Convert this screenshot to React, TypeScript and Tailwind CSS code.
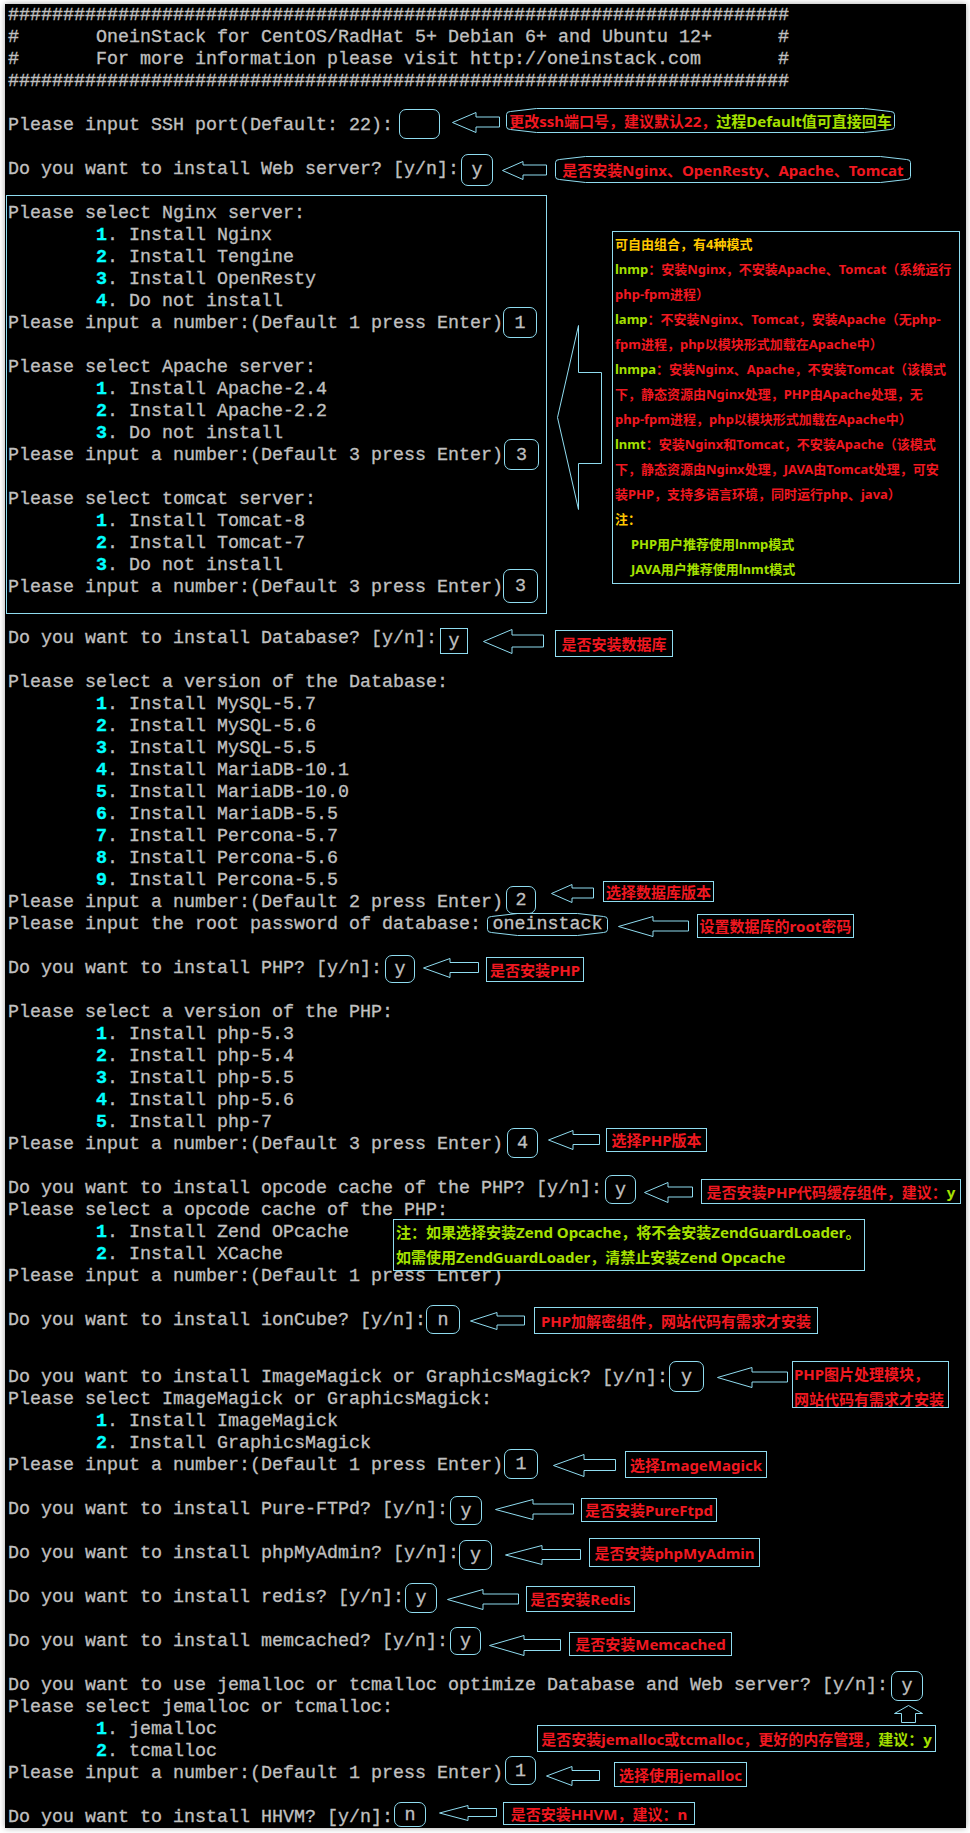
import type { ReactNode } from "react";

const CN = "font-['Noto_Sans','Noto_Sans_CJK_SC',sans-serif] font-bold whitespace-nowrap";
const HASHES = "#".repeat(71);
const STROKE = "#8fdcf0";

function Line({ text, className = "", children }: { text?: ReactNode; className?: string; children?: ReactNode }) {
  return (
    <div className={`flex h-[22px] items-center ${className}`}>
      <span className="mt-[2px] shrink-0 [-webkit-text-stroke:0.3px]">{text}</span>
      {children}
    </div>
  );
}

function Item({ n, text, children }: { n: number; text: string; children?: ReactNode }) {
  return (
    <Line
      text={
        <>
          {"        "}
          <span className="font-bold text-[#00ffff]">{n}</span>. {text}
        </>
      }
    >
      {children}
    </Line>
  );
}

function Blank() {
  return <div className="h-[22px]" />;
}

function Answer({ className, children }: { className: string; children?: ReactNode }) {
  return (
    <div className={`flex shrink-0 items-center justify-center rounded-[7px] border border-[#8fdcf0] pt-[2px] [-webkit-text-stroke:0.3px] ${className}`}>
      {children}
    </div>
  );
}

// left-pointing outline arrow
function Arrow({ w, h, head, shaft, className }: { w: number; h: number; head: number; shaft: number; className: string }) {
  const top = (h - shaft) / 2 - 0.5;
  const bot = top + shaft;
  const mid = h / 2;
  const pts = `0.5,${mid} ${head},0.5 ${head},${top} ${w - 0.5},${top} ${w - 0.5},${bot} ${head},${bot} ${head},${h - 0.5}`;
  return (
    <svg width={w} height={h} viewBox={`0 0 ${w} ${h}`} fill="none" stroke={STROKE} className={`shrink-0 ${className}`}>
      <polygon points={pts} />
    </svg>
  );
}

function Tag({ className, children }: { className: string; children: ReactNode }) {
  return (
    <div className={`flex shrink-0 items-center justify-center border border-[#8fdcf0] text-[15px] text-[#f01820] ${CN} ${className}`}>
      {children}
    </div>
  );
}

function bulgePath(w: number, h: number) {
  const r = w - 0.5;
  const u = h - 0.5;
  const t = 0.5;
  const a = 0.5;
  const edge = Math.min(30, w / 4);
  return `M${a} ${t + 6}Q${a} ${t + 3} ${a + 4} ${t + 3}L${a + edge} ${t}L${r - edge} ${t}L${r - 4} ${t + 3}Q${r} ${t + 3} ${r} ${t + 6}L${r} ${u - 6}Q${r} ${u - 3} ${r - 4} ${u - 3}L${r - edge} ${u}L${a + edge} ${u}L${a + 4} ${u - 3}Q${a} ${u - 3} ${a} ${u - 6}Z`;
}

// callout with the flattened-ellipse outline
function Bulge({ w, h, className, children }: { w: number; h: number; className: string; children: ReactNode }) {
  return (
    <div className={`relative flex shrink-0 items-center justify-center ${className}`}>
      <svg width={w} height={h} viewBox={`0 0 ${w} ${h}`} fill="none" stroke={STROKE} className="absolute top-0 left-0">
        <path d={bulgePath(w, h)} />
      </svg>
      {children}
    </div>
  );
}

function Ok({ children }: { children: ReactNode }) {
  return <span className="text-[#a5e000]">{children}</span>;
}

function ModeNote() {
  return (
    <div className={`ml-[9px] h-[353px] w-[348px] shrink-0 border border-[#8fdcf0] mt-[36px] pl-[2px] text-[13px] leading-[25px] text-[#f01820] ${CN}`}>
      <div className="text-[#ffc800]">可自由组合，有4种模式</div>
      <div><Ok>lnmp</Ok>：安装Nginx，不安装Apache、Tomcat（系统运行</div>
      <div>php-fpm进程）</div>
      <div><Ok>lamp</Ok>：不安装Nginx、Tomcat，安装Apache（无php-</div>
      <div>fpm进程，php以模块形式加载在Apache中）</div>
      <div><Ok>lnmpa</Ok>：安装Nginx、Apache，不安装Tomcat（该模式</div>
      <div>下，静态资源由Nginx处理，PHP由Apache处理，无</div>
      <div>php-fpm进程，php以模块形式加载在Apache中）</div>
      <div><Ok>lnmt</Ok>：安装Nginx和Tomcat，不安装Apache（该模式</div>
      <div>下，静态资源由Nginx处理，JAVA由Tomcat处理，可安</div>
      <div>装PHP，支持多语言环境，同时运行php、java）</div>
      <div className="text-[#ffc800]">注：</div>
      <div className="pl-[16px] text-[#a5e000]">PHP用户推荐使用lnmp模式</div>
      <div className="pl-[16px] text-[#a5e000]">JAVA用户推荐使用lnmt模式</div>
    </div>
  );
}

function WebServerSection() {
  return (
    <div className="-ml-[2px] flex h-[419px] items-start">
      <div className="h-[419px] w-[541px] shrink-0 border border-[#8fdcf0] pt-[6px] pl-[1px]">
        <Line text="Please select Nginx server:" />
        <Item n={1} text="Install Nginx" />
        <Item n={2} text="Install Tengine" />
        <Item n={3} text="Install OpenResty" />
        <Item n={4} text="Do not install" />
        <Line text="Please input a number:(Default 1 press Enter)">
          <Answer className="mb-[1px] h-[31px] w-[34px]">1</Answer>
        </Line>
        <Blank />
        <Line text="Please select Apache server:" />
        <Item n={1} text="Install Apache-2.4" />
        <Item n={2} text="Install Apache-2.2" />
        <Item n={3} text="Do not install" />
        <Line text="Please input a number:(Default 3 press Enter)">
          <Answer className="mb-[1px] ml-[1px] h-[31px] w-[35px]">3</Answer>
        </Line>
        <Blank />
        <Line text="Please select tomcat server:" />
        <Item n={1} text="Install Tomcat-8" />
        <Item n={2} text="Install Tomcat-7" />
        <Item n={3} text="Do not install" />
        <Line text="Please input a number:(Default 3 press Enter)">
          <Answer className="mb-[2px] h-[34px] w-[35px]">3</Answer>
        </Line>
      </div>
      <svg width="46" height="185" viewBox="0 0 46 185" fill="none" stroke={STROKE} className="mt-[130px] ml-[10px] shrink-0">
        <polygon points="21.5,0.5 21.5,47.5 44.5,47.5 44.5,138.5 21.5,138.5 21.5,184.5 0.5,92.5" />
      </svg>
      <ModeNote />
    </div>
  );
}

export default function App() {
  return (
    <div className="h-[1833px] w-[970px] bg-white pt-[4px] pl-[5px]">
      <div className="relative h-[1824px] w-[961px] overflow-hidden bg-black pl-[3px] font-['Liberation_Mono',monospace] text-[18.33px] leading-[22px] font-normal whitespace-pre text-[#c0c0c0] shadow-[0_0_6px_rgba(0,0,0,0.35)]">
        <Line text={HASHES} />
        <Line text="#       OneinStack for CentOS/RadHat 5+ Debian 6+ and Ubuntu 12+      #" />
        <Line text="#       For more information please visit http://oneinstack.com       #" />
        <Line text={HASHES} />
        <Blank />
        <Line text="Please input SSH port(Default: 22):">
          <Answer className="mb-[2px] ml-[6px] h-[30px] w-[41px]" />
          <Arrow w={48} h={21} head={24} shaft={10} className="mb-[5px] ml-[12px]" />
          <Bulge w={389} h={25} className="mb-[9px] ml-[6px] h-[25px] w-[389px] text-[15px] text-[#f01820]">
            <span className={`relative ${CN}`}>
              更改ssh端口号，建议默认22，<Ok>过程Default值可直接回车</Ok>
            </span>
          </Bulge>
        </Line>
        <Blank />
        <Line text="Do you want to install Web server? [y/n]:">
          <Answer className="mt-[2px] ml-[2px] h-[32px] w-[32px]">y</Answer>
          <Arrow w={45} h={19} head={21} shaft={10} className="mt-[3px] ml-[9px]" />
          <Bulge w={356} h={27} className="mt-[1px] ml-[8px] h-[27px] w-[356px] text-[15px] text-[#f01820]">
            <span className={`relative ${CN}`}>是否安装Nginx、OpenResty、Apache、Tomcat</span>
          </Bulge>
        </Line>
        <div className="h-[15px]" />
        <WebServerSection />

        <Line text="Do you want to install Database? [y/n]:" className="mt-[13px]">
          <Answer className="mt-[6px] ml-[3px] h-[26px] w-[28px] rounded-none">y</Answer>
          <Arrow w={61} h={25} head={29} shaft={12} className="mt-[7px] ml-[15px]" />
          <Tag className="mt-[11px] ml-[11px] h-[27px] w-[118px]">是否安装数据库</Tag>
        </Line>
        <Blank />
        <Line text="Please select a version of the Database:" />
        <Item n={1} text="Install MySQL-5.7" />
        <Item n={2} text="Install MySQL-5.6" />
        <Item n={3} text="Install MySQL-5.5" />
        <Item n={4} text="Install MariaDB-10.1" />
        <Item n={5} text="Install MariaDB-10.0" />
        <Item n={6} text="Install MariaDB-5.5" />
        <Item n={7} text="Install Percona-5.7" />
        <Item n={8} text="Install Percona-5.6" />
        <Item n={9} text="Install Percona-5.5" />
        <Line text="Please input a number:(Default 2 press Enter)">
          <Answer className="mb-[4px] ml-[3px] h-[28px] w-[30px]">2</Answer>
          <Arrow w={43} h={19} head={21} shaft={10} className="mb-[17px] ml-[15px]" />
          <Tag className="mb-[21px] ml-[9px] h-[21px] w-[111px]">选择数据库版本</Tag>
        </Line>
        <Line text="Please input the root password of database:">
          <Bulge w={121} h={23} className="mt-[1px] ml-[6px] h-[23px] w-[121px]">
            <span className="relative [-webkit-text-stroke:0.3px]">oneinstack</span>
          </Bulge>
          <Arrow w={71} h={21} head={35} shaft={10} className="mt-[5px] ml-[10px]" />
          <Tag className="mt-[4px] ml-[8px] h-[24px] w-[157px]">设置数据库的root密码</Tag>
        </Line>
        <Blank />
        <Line text="Do you want to install PHP? [y/n]:">
          <Answer className="mt-[2px] ml-[3px] h-[28px] w-[30px]">y</Answer>
          <Arrow w={56} h={20} head={27} shaft={10} className="ml-[8px]" />
          <Tag className="mt-[3px] ml-[7px] h-[25px] w-[98px]">是否安装PHP</Tag>
        </Line>
        <Blank />
        <Line text="Please select a version of the PHP:" />
        <Item n={1} text="Install php-5.3" />
        <Item n={2} text="Install php-5.4" />
        <Item n={3} text="Install php-5.5" />
        <Item n={4} text="Install php-5.6" />
        <Item n={5} text="Install php-7" />
        <Line text="Please input a number:(Default 3 press Enter)">
          <Answer className="mb-[2px] ml-[4px] h-[30px] w-[31px]">4</Answer>
          <Arrow w={52} h={20} head={25} shaft={10} className="mb-[8px] ml-[10px]" />
          <Tag className="mb-[8px] ml-[6px] h-[24px] w-[101px]">选择PHP版本</Tag>
        </Line>
        <Blank />
        <Line text="Do you want to install opcode cache of the PHP? [y/n]:">
          <Answer className="mt-[3px] ml-[3px] h-[29px] w-[31px]">y</Answer>
          <Arrow w={49} h={21} head={24} shaft={10} className="mt-[9px] ml-[8px]" />
          <Tag className="mt-[7px] ml-[8px] h-[25px] w-[260px]">
            是否安装PHP代码缓存组件，建议：<Ok>y</Ok>
          </Tag>
        </Line>
        <Line text="Please select a opcode cache of the PHP:" />
        <Item n={1} text="Install Zend OPcache" />
        <Item n={2} text="Install XCache" />
        <Line text="Please input a number:(Default 1 press Enter)" />
        {/* this note sits on top of the terminal lines */}
        <div className={`absolute top-[1215px] left-[388px] h-[52px] w-[472px] border border-[#8fdcf0] bg-black pl-[2px] text-[15px] leading-[25px] text-[#a5e000] ${CN}`}>
          <div>注：如果选择安装Zend Opcache，将不会安装ZendGuardLoader。</div>
          <div>如需使用ZendGuardLoader，清禁止安装Zend Opcache</div>
        </div>
        <Blank />
        <Line text="Do you want to install ionCube? [y/n]:">
          <Answer className="mb-[1px] h-[29px] w-[34px]">n</Answer>
          <Arrow w={55} h={18} head={27} shaft={9} className="mt-[2px] ml-[10px]" />
          <Tag className="mt-[1px] ml-[9px] h-[27px] w-[284px]">PHP加解密组件，网站代码有需求才安装</Tag>
        </Line>
        <Blank />
        <Line text="Do you want to install ImageMagick or GraphicsMagick? [y/n]:" className="mt-[13px]">
          <Answer className="mb-[1px] ml-[1px] h-[31px] w-[35px]">y</Answer>
          <Arrow w={71} h={21} head={35} shaft={10} className="mt-[1px] ml-[13px]" />
          <Tag className="mt-[15px] ml-[4px] h-[47px] w-[157px] flex-col items-start justify-start pl-[1px] leading-[25px]">
            <div>PHP图片处理模块，</div>
            <div>网站代码有需求才安装</div>
          </Tag>
        </Line>
        <Line text="Please select ImageMagick or GraphicsMagick:" />
        <Item n={1} text="Install ImageMagick" />
        <Item n={2} text="Install GraphicsMagick" />
        <Line text="Please input a number:(Default 1 press Enter)">
          <Answer className="mb-[2px] ml-[1px] h-[30px] w-[34px]">1</Answer>
          <Arrow w={63} h={23} head={31} shaft={11} className="mt-[1px] ml-[15px]" />
          <Tag className="mb-[1px] ml-[9px] h-[27px] w-[142px]">选择ImageMagick</Tag>
        </Line>
        <Blank />
        <Line text="Do you want to install Pure-FTPd? [y/n]:">
          <Answer className="mt-[3px] ml-[2px] h-[29px] w-[32px]">y</Answer>
          <Arrow w={79} h={21} head={38} shaft={10} className="mt-[1px] ml-[13px]" />
          <Tag className="mt-[2px] ml-[7px] h-[24px] w-[136px]">是否安装PureFtpd</Tag>
        </Line>
        <Blank />
        <Line text="Do you want to install phpMyAdmin? [y/n]:">
          <Answer className="mt-[4px] h-[30px] w-[33px]">y</Answer>
          <Arrow w={76} h={20} head={37} shaft={10} className="mt-[4px] ml-[13px]" />
          <Tag className="mb-[1px] ml-[8px] h-[29px] w-[171px]">是否安装phpMyAdmin</Tag>
        </Line>
        <Blank />
        <Line text="Do you want to install redis? [y/n]:">
          <Answer className="mt-[2px] ml-[1px] h-[30px] w-[32px]">y</Answer>
          <Arrow w={72} h={21} head={36} shaft={10} className="mt-[5px] ml-[10px]" />
          <Tag className="mt-[4px] ml-[7px] h-[26px] w-[109px]">是否安装Redis</Tag>
        </Line>
        <Blank />
        <Line text="Do you want to install memcached? [y/n]:">
          <Answer className="ml-[2px] h-[28px] w-[31px]">y</Answer>
          <Arrow w={72} h={21} head={35} shaft={11} className="mt-[9px] ml-[8px]" />
          <Tag className="mt-[6px] ml-[8px] h-[24px] w-[163px]">是否安装Memcached</Tag>
        </Line>
        <Blank />
        <Line text="Do you want to use jemalloc or tcmalloc optimize Database and Web server? [y/n]:">
          <Answer className="mt-[2px] ml-[3px] h-[30px] w-[32px]">y</Answer>
        </Line>
        <Line text="Please select jemalloc or tcmalloc:">
          <svg width="29" height="18" viewBox="0 0 29 18" fill="none" stroke={STROKE} className="mt-[14px] ml-[501px] shrink-0">
            <polygon points="14.5,0.5 28.5,8.5 21.5,8.5 21.5,17.5 7.5,17.5 7.5,8.5 0.5,8.5" />
          </svg>
        </Line>
        <Item n={1} text="jemalloc">
          <Tag className="mt-[19px] ml-[320px] h-[27px] w-[399px]">
            是否安装jemalloc或tcmalloc，更好的内存管理，<Ok>建议：y</Ok>
          </Tag>
        </Item>
        <Item n={2} text="tcmalloc" />
        <Line text="Please input a number:(Default 1 press Enter)">
          <Answer className="mb-[5px] ml-[2px] h-[29px] w-[31px]">1</Answer>
          <Arrow w={54} h={20} head={26} shaft={10} className="mt-[5px] ml-[10px]" />
          <Tag className="mt-[3px] ml-[14px] h-[25px] w-[133px]">选择使用jemalloc</Tag>
        </Line>
        <Blank />
        <Line text="Do you want to install HHVM? [y/n]:">
          <Answer className="mb-[5px] ml-[1px] h-[25px] w-[32px]">n</Answer>
          <Arrow w={58} h={16} head={29} shaft={8} className="mb-[8px] ml-[13px]" />
          <Tag className="mb-[7px] ml-[6px] h-[23px] w-[192px]">是否安装HHVM，建议：n</Tag>
        </Line>
      </div>
    </div>
  );
}
